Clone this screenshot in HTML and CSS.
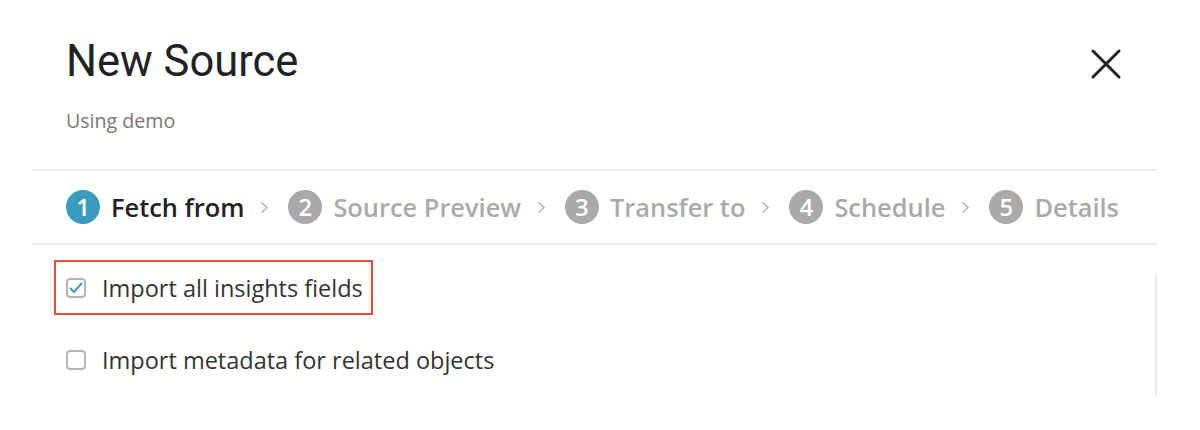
FILE: index.html
```html
<!DOCTYPE html>
<html>
<head>
<meta charset="utf-8">
<link rel="stylesheet" href="styles.css">
</head>
<body>
<div class="modal">
  <div class="header">
    <div class="titles">
      <h1 class="title">New Source</h1>
      <div class="subtitle">Using demo</div>
    </div>
    <button class="close" aria-label="Close">
      <svg width="32" height="32" viewBox="0 0 32 32"><path d="M3 3 L29 29 M29 3 L3 29" stroke="#222" stroke-width="3" stroke-linecap="round" fill="none"/></svg>
    </button>
  </div>
  <div class="steps">
    <div class="step active"><span class="num">1</span><span class="label">Fetch from</span></div>
    <svg class="chev" width="9" height="13" viewBox="0 0 9 13"><path d="M1.5 1.5 L7 6.5 L1.5 11.5" stroke="#b0b0b0" stroke-width="1.4" fill="none"/></svg>
    <div class="step"><span class="num">2</span><span class="label">Source Preview</span></div>
    <svg class="chev" width="9" height="13" viewBox="0 0 9 13"><path d="M1.5 1.5 L7 6.5 L1.5 11.5" stroke="#b0b0b0" stroke-width="1.4" fill="none"/></svg>
    <div class="step"><span class="num">3</span><span class="label">Transfer to</span></div>
    <svg class="chev" width="9" height="13" viewBox="0 0 9 13"><path d="M1.5 1.5 L7 6.5 L1.5 11.5" stroke="#b0b0b0" stroke-width="1.4" fill="none"/></svg>
    <div class="step"><span class="num">4</span><span class="label">Schedule</span></div>
    <svg class="chev" width="9" height="13" viewBox="0 0 9 13"><path d="M1.5 1.5 L7 6.5 L1.5 11.5" stroke="#b0b0b0" stroke-width="1.4" fill="none"/></svg>
    <div class="step"><span class="num">5</span><span class="label">Details</span></div>
  </div>
  <div class="content">
    <div class="options">
      <label class="option highlighted">
        <span class="box checked"><svg width="14" height="12" viewBox="0 0 14 12"><path d="M1.5 6.5 L5 10 L12.5 1.5" stroke="#3a9bbf" stroke-width="2" fill="none" stroke-linecap="round" stroke-linejoin="round"/></svg></span>
        <span class="opt-label">Import all insights fields</span>
      </label>
      <label class="option">
        <span class="box"></span>
        <span class="opt-label">Import metadata for related objects</span>
      </label>
    </div>
    <div class="scroll"></div>
  </div>
</div>
</body>
</html>
```
FILE: styles.css
```css
html, body { margin: 0; padding: 0; background: #fff; }
body { font-family: "Open Sans", "Noto Sans", sans-serif; width: 1200px; height: 430px; overflow: hidden; }
.modal { margin: 0 43px 0 32px; }
.header { display: flex; justify-content: space-between; align-items: flex-start; padding: 34px 34px 0 34px; height: 171px; box-sizing: border-box; border-bottom: 2px solid #ebebeb; }
.title { font-family: Roboto, "Liberation Sans", sans-serif; font-weight: 400; font-size: 43.5px; line-height: 56px; color: #222; margin: 0; }
.subtitle { margin-top: 18px; font-size: 19.6px; line-height: 26px; color: #777; }
.close { background: none; border: 0; padding: 0; margin-top: 14px; margin-right: 1px; width: 32px; height: 32px; cursor: pointer; }
.close svg { display: block; }
.steps { display: flex; align-items: center; height: 74px; padding-left: 34px; border-bottom: 2px solid #ebebeb; box-sizing: border-box; }
.step { display: flex; align-items: center; gap: 11px; }
.num { width: 34px; height: 34px; border-radius: 50%; background: #a9a9a9; color: #fff; font-size: 24px; font-weight: 600; display: flex; align-items: center; justify-content: center; line-height: 1; }
.step.active .num { background: #3a9bbf; }
.label { font-size: 25.4px; font-weight: 600; color: #aaa; line-height: 34px; }
.step.active .label { color: #222; }
.chev { display: block; margin: 0 19px 0 16px; }
.content { display: flex; justify-content: space-between; }
.options { padding: 15px 0 0 22px; }
.option { display: flex; align-items: center; gap: 16px; height: 55px; padding: 0 8px 0 10px; border: 2px solid #fff; box-sizing: border-box; width: fit-content; }
.option + .option { margin-top: 17px; }
.option.highlighted { border-color: #e94b3c; }
.box { width: 20px; height: 20px; border: 2px solid #b4b4b4; border-radius: 4px; box-sizing: border-box; display: flex; align-items: center; justify-content: center; }
.opt-label { font-size: 23.5px; color: #333; line-height: 32px; }
.scroll { width: 2px; height: 123px; margin-top: 28px; background: #ebebeb; }
```
